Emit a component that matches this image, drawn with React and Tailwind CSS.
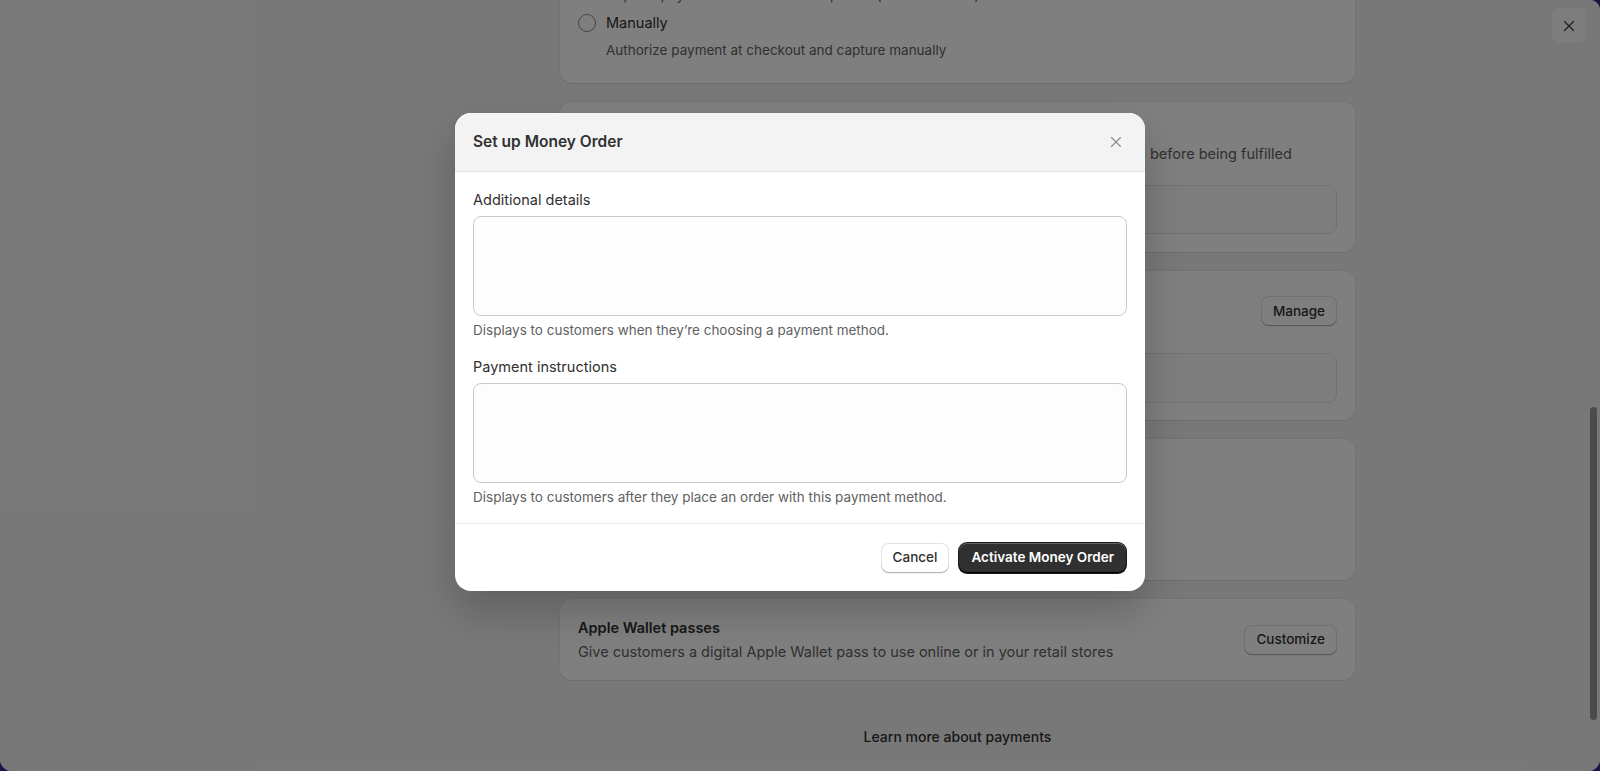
import { X } from 'lucide-react';

function SecondaryButton({ children }) {
  return (
    <button className="h-[30px] px-[12px] rounded-[8px] bg-white text-[13.5px] font-medium text-[#303030] shadow-[inset_0_-1px_0_0_#b5b5b5,inset_0_0_0_1px_#e3e3e3,0_1px_0_0_rgba(0,0,0,0.05)]">
      {children}
    </button>
  );
}

function Card({ className = '', children }) {
  return (
    <div className={`bg-white rounded-[12px] shadow-[0_1px_0_0_rgba(26,26,26,0.07),0_0_0_1px_rgba(0,0,0,0.03)] px-[18px] ${className}`}>
      {children}
    </div>
  );
}

function Field({ label, help }) {
  return (
    <div className="flex flex-col">
      <label className="text-[14.5px] leading-[20px] text-[#303030]">{label}</label>
      <textarea className="mt-[6px] h-[100px] w-full resize-none rounded-[8px] border border-[#c9c9c9] bg-[#fdfdfd] outline-none" />
      <p className="mt-[5px] text-[13.5px] leading-[18px] text-[#616161]">{help}</p>
    </div>
  );
}

export default function App() {
  return (
    <div className="w-[1600px] h-[771px] bg-[#1a1446] font-['Inter',sans-serif]">
      <div className="relative w-full h-full overflow-hidden rounded-b-[12px] rounded-tr-[10px] bg-[#f1f1f1]">
        {/* page content (scrolled) */}
        <div className="pl-[560px] -mt-[59px]">
          <div className="w-[795px] flex flex-col gap-[19px]">
            <Card className="pt-[18px] pb-[23px]">
              <div className="flex items-center h-[20px] gap-[10px]">
                <span className="w-[18px] h-[18px] rounded-full border border-[#8a8a8a] bg-white" />
                <span className="text-[14.5px] text-[#303030]">Automatically at checkout</span>
              </div>
              <p className="mt-[6px] pl-[28px] text-[13.5px] leading-[20px] text-[#616161]">Capture payment when an order is placed (recommended)</p>
              <div className="mt-[8px] flex items-center h-[20px] gap-[10px]">
                <span className="w-[18px] h-[18px] rounded-full border border-[#8a8a8a] bg-white" />
                <span className="text-[14.5px] text-[#303030]">Manually</span>
              </div>
              <p className="mt-[7px] pl-[28px] text-[13.5px] leading-[20px] text-[#616161]">Authorize payment at checkout and capture manually</p>
            </Card>

            <Card className="pt-[18px] pb-[18px] h-[150px]">
              <p className="text-[14.5px] leading-[20px] font-semibold text-[#303030]">Manual payment methods</p>
              <p className="mt-[4px] text-[14.5px] leading-[20px] text-[#616161] whitespace-nowrap">Orders placed outside your online store, like cash on delivery, need to be approved before being fulfilled</p>
              <div className="mt-[21px] h-[49px] rounded-[8px] border border-[#e3e3e3] bg-[#fafafa]" />
            </Card>

            <Card className="pt-[18px] pb-[17px] h-[149px]">
              <div className="flex items-center justify-between">
                <div>
                  <p className="text-[14.5px] leading-[20px] font-semibold text-[#303030]">Supported payment methods</p>
                  <p className="mt-[4px] text-[14.5px] leading-[20px] text-[#616161]">Payment methods available with Shopify Payments</p>
                </div>
                <SecondaryButton>Manage</SecondaryButton>
              </div>
              <div className="mt-[20px] h-[50px] rounded-[8px] border border-[#e3e3e3] bg-[#fafafa]" />
            </Card>

            <Card className="pt-[18px] h-[141px]">
              <p className="text-[14.5px] leading-[20px] font-semibold text-[#303030]">Gift cards</p>
              <p className="mt-[4px] text-[14.5px] leading-[20px] text-[#616161]">Gift cards can be issued to customers</p>
            </Card>

            <Card className="h-[81px] flex items-center justify-between">
              <div>
                <p className="text-[14.5px] leading-[20px] font-semibold text-[#303030]">Apple Wallet passes</p>
                <p className="mt-[4px] text-[14.5px] leading-[20px] text-[#616161]">Give customers a digital Apple Wallet pass to use online or in your retail stores</p>
              </div>
              <SecondaryButton>Customize</SecondaryButton>
            </Card>

            <div className="mt-[27px] text-center text-[14px] font-medium text-[#303030]">Learn more about payments</div>
          </div>
        </div>

        {/* window close button */}
        <button className="absolute top-[8px] left-[1552px] w-[34px] h-[35px] rounded-[8px] bg-[#fafafa] flex items-center justify-center text-[#3a3a3a]">
          <X size={18} strokeWidth={1.6} />
        </button>

        {/* scrollbar */}
        <div className="absolute top-[407px] left-[1590px] w-[7px] h-[313px] rounded-full bg-[#969696]" />

        {/* overlay + dialog */}
        <div className="absolute inset-0 bg-black/50 flex justify-center pt-[113px]">
          <div className="w-[690px] h-[478px] bg-white rounded-[16px] overflow-hidden shadow-[0_20px_40px_rgba(0,0,0,0.2)] flex flex-col">
            <div className="h-[59px] bg-[#f3f3f3] border-b border-[#e3e3e3] flex items-center justify-between pl-[18px] pr-[17px]">
              <h2 className="text-[15.5px] font-semibold text-[#303030]">Set up Money Order</h2>
              <button className="w-[24px] h-[24px] flex items-center justify-center text-[#8a8a8a]">
                <X size={18} strokeWidth={1.5} />
              </button>
            </div>
            <div className="px-[18px] pt-[18px] pb-[17px] flex flex-col gap-[18px] border-b border-[#ebebeb]">
              <Field label="Additional details" help="Displays to customers when they’re choosing a payment method." />
              <Field label="Payment instructions" help="Displays to customers after they place an order with this payment method." />
            </div>
            <div className="flex-1 flex items-center justify-end gap-[10px] pr-[19px]">
              <SecondaryButton>Cancel</SecondaryButton>
              <button className="h-[30px] px-[12px] rounded-[8px] bg-[#303030] text-[13.5px] font-semibold text-white shadow-[inset_0_1px_0_0_rgba(255,255,255,0.25),inset_0_-1px_0_0_#000,0_0_0_1px_#1a1a1a]">
                Activate Money Order
              </button>
            </div>
          </div>
        </div>
      </div>
    </div>
  );
}
